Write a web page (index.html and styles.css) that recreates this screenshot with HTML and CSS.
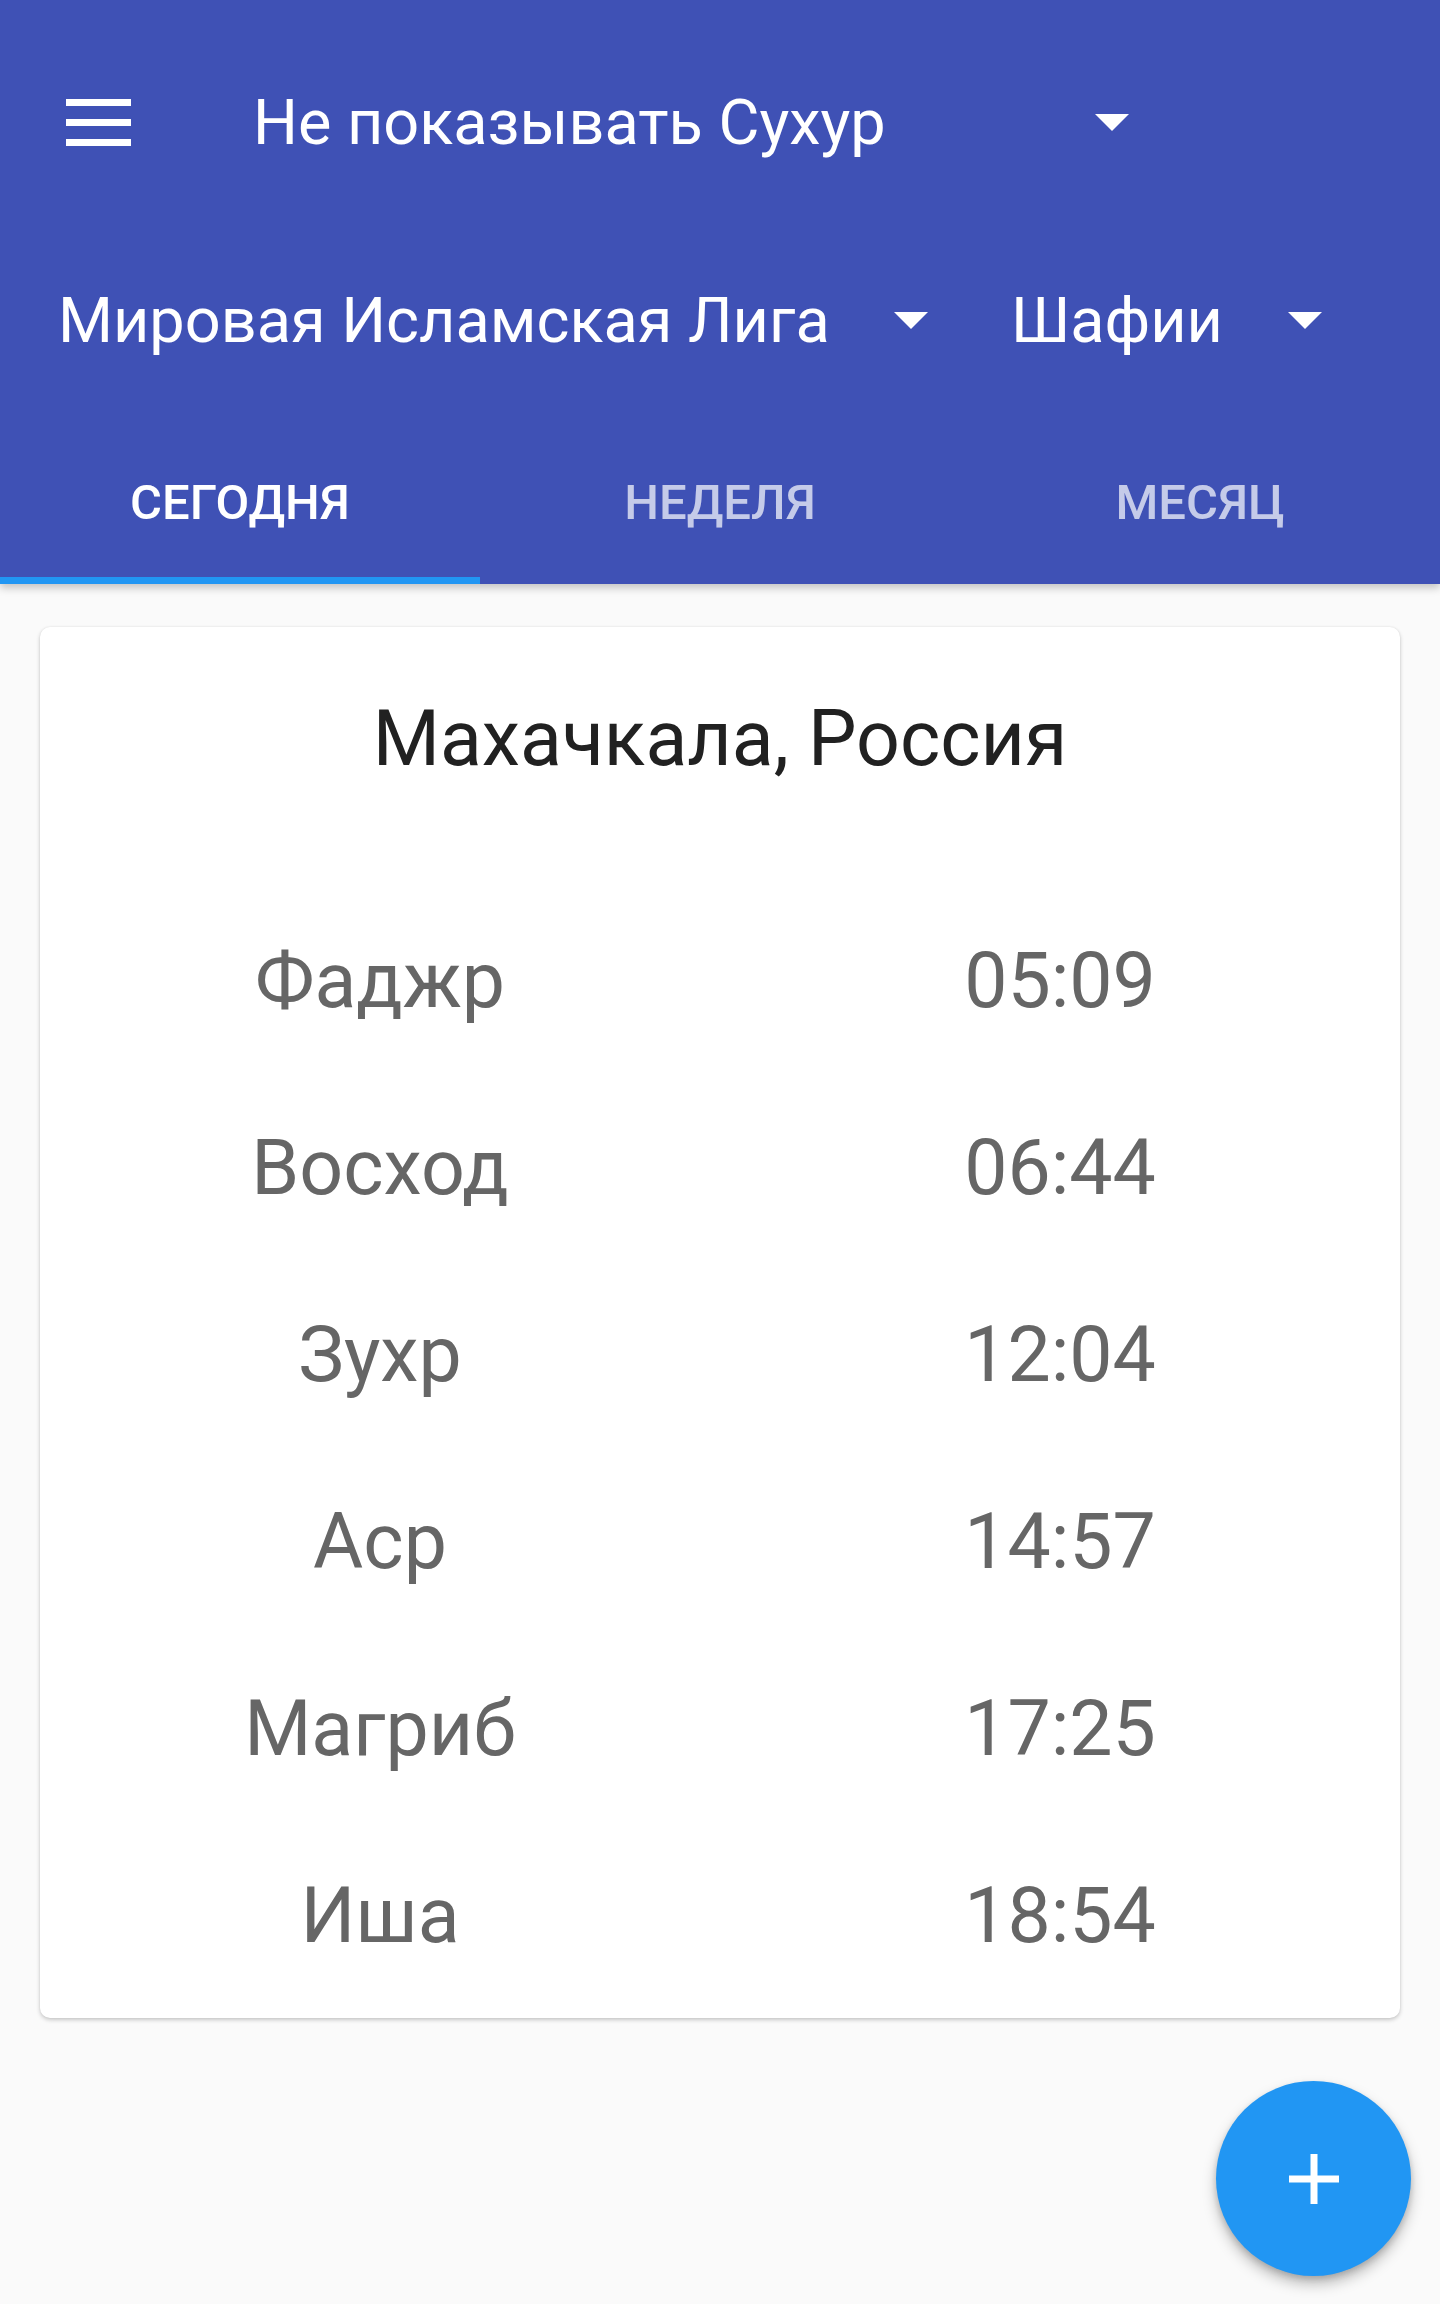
FILE: index.html
```html
<!DOCTYPE html>
<html lang="ru">
<head>
    <meta charset="UTF-8">
    <meta name="viewport" content="width=device-width, initial-scale=1.0">
    <title>Время намаза</title>
    <link rel="stylesheet" href="styles.css">
</head>
<body>
    <header class="appbar">
        <div class="toolbar">
            <button class="menu-btn" aria-label="Меню">
                <svg width="65" height="47" viewBox="0 0 65 47">
                    <rect x="0" y="0" width="65" height="7" fill="#fff"/>
                    <rect x="0" y="20" width="65" height="7" fill="#fff"/>
                    <rect x="0" y="40" width="65" height="7" fill="#fff"/>
                </svg>
            </button>
            <div class="spinner spinner-suhur">
                <span>Не показывать Сухур</span>
                <i class="caret"></i>
            </div>
        </div>
        <div class="settings-row">
            <div class="spinner spinner-method">
                <span>Мировая Исламская Лига</span>
                <i class="caret"></i>
            </div>
            <div class="spinner spinner-madhab">
                <span>Шафии</span>
                <i class="caret"></i>
            </div>
        </div>
        <nav class="tabs">
            <a class="tab active">Сегодня</a>
            <a class="tab">Неделя</a>
            <a class="tab">Месяц</a>
        </nav>
    </header>

    <main class="content">
        <section class="card">
            <h1 class="city">Махачкала, Россия</h1>
            <div class="times">
                <div class="row"><span>Фаджр</span><span>05:09</span></div>
                <div class="row"><span>Восход</span><span>06:44</span></div>
                <div class="row"><span>Зухр</span><span>12:04</span></div>
                <div class="row"><span>Аср</span><span>14:57</span></div>
                <div class="row"><span>Магриб</span><span>17:25</span></div>
                <div class="row"><span>Иша</span><span>18:54</span></div>
            </div>
        </section>
    </main>

    <button class="fab" aria-label="Добавить">
        <svg width="50" height="50" viewBox="0 0 50 50">
            <rect x="21.5" y="0" width="7" height="50" fill="#fff"/>
            <rect x="0" y="21.5" width="50" height="7" fill="#fff"/>
        </svg>
    </button>
</body>
</html>
```

FILE: styles.css
```css
/* Base */
body {
    margin: 0;
    font-family: Roboto, 'Noto Sans', sans-serif;
    background: #fafafa;
    min-height: 2304px;
}

/* App bar */
.appbar {
    background: #3f51b5;
    color: #fff;
    box-shadow: 0 4px 8px rgba(0, 0, 0, 0.22);
    position: relative;
    z-index: 1;
}

.toolbar {
    height: 245px;
    display: flex;
    align-items: center;
    padding-left: 66px;
}

.menu-btn {
    background: none;
    border: none;
    padding: 0;
    display: flex;
    width: 65px;
    height: 47px;
}

.spinner {
    display: flex;
    align-items: center;
    font-size: 63px;
    line-height: 1;
    white-space: nowrap;
}

.spinner span {
    flex: 1;
}

.caret {
    width: 0;
    height: 0;
    border-left: 17px solid transparent;
    border-right: 17px solid transparent;
    border-top: 17px solid #fff;
}

.spinner-suhur {
    margin-left: 122px;
    width: 876px;
}

.settings-row {
    height: 151px;
    padding-bottom: 20px;
    display: flex;
    align-items: center;
    padding-left: 58px;
}

.spinner-method {
    width: 870px;
}

.spinner-madhab {
    margin-left: 83px;
    width: 311px;
}

/* Tabs */
.tabs {
    display: grid;
    grid-template-columns: repeat(3, 1fr);
    height: 168px;
}

.tab {
    display: flex;
    align-items: center;
    justify-content: center;
    text-transform: uppercase;
    font-weight: 500;
    font-size: 49px;
    color: rgba(255, 255, 255, 0.7);
    box-sizing: border-box;
    padding-top: 12px;
    border-bottom: 7px solid transparent;
}

.tab.active {
    color: #fff;
    border-bottom-color: #2196f3;
}

/* Card */
.content {
    padding: 43px 40px 0;
}

.card {
    background: #fff;
    border-radius: 10px;
    box-shadow: 0 2px 4px rgba(0, 0, 0, 0.2), 0 0 2px rgba(0, 0, 0, 0.08);
    padding: 67px 0 9px;
}

.city {
    margin: 0;
    text-align: center;
    font-weight: 400;
    font-size: 77px;
    line-height: 90px;
    color: #212121;
}

.times {
    margin-top: 103px;
}

.row {
    display: grid;
    grid-template-columns: 1fr 1fr;
    height: 187px;
    align-items: center;
    font-size: 77px;
    line-height: 90px;
    color: #666;
    text-align: center;
}

/* FAB */
.fab {
    position: fixed;
    right: 29px;
    bottom: 28px;
    width: 195px;
    height: 195px;
    border-radius: 50%;
    border: none;
    background: #2196f3;
    display: flex;
    align-items: center;
    justify-content: center;
    box-shadow: 0 8px 14px rgba(0, 0, 0, 0.25), 0 3px 6px rgba(0, 0, 0, 0.15);
}
```
